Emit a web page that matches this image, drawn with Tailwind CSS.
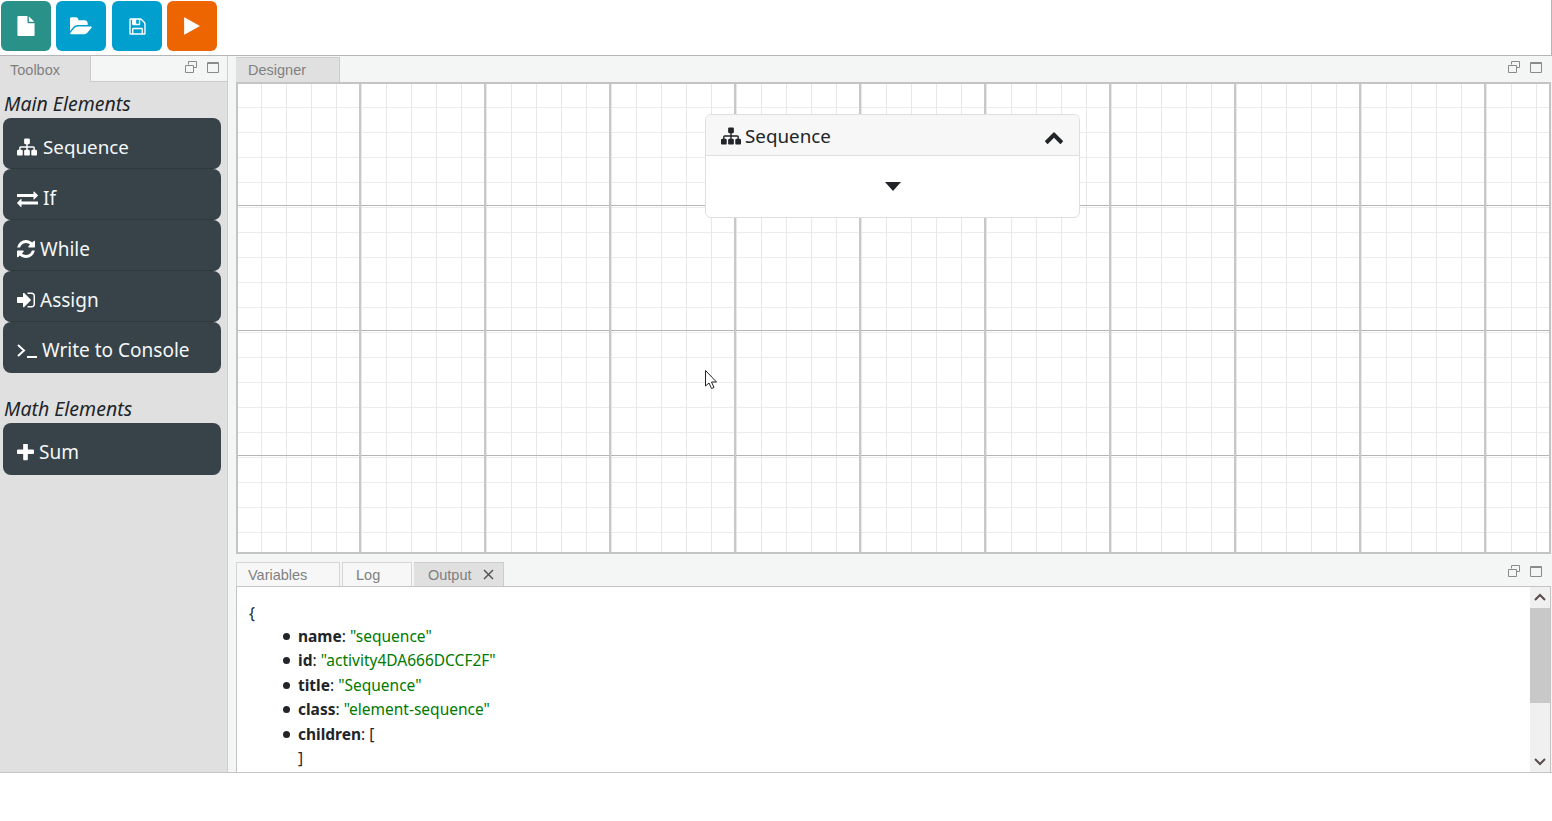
<!DOCTYPE html>
<html lang="en">
<head>
    <meta charset="UTF-8">
    <title>Workflow Designer</title>
    <script src="https://cdn.jsdelivr.net/npm/@tailwindcss/browser@4"></script>
</head>
<body class="h-[821px] overflow-hidden bg-white font-['Noto_Sans',sans-serif] text-[#212529]">

    <!-- Toolbar -->
    <div class="flex h-[56px] items-start border-r border-b border-[#b5b5b5] pt-px pl-px">
        <button class="flex size-[50px] items-center justify-center rounded-md bg-[#2a9188]">
            <svg class="size-[20px] fill-white" viewBox="0 0 1792 1792"><path d="M1152 512v-472q22 14 36 28l408 408q14 14 28 36h-472zm-128 32q0 40 28 68t68 28h544v1056q0 40-28 68t-68 28h-1344q-40 0-68-28t-28-68v-1600q0-40 28-68t68-28h800v544z"/></svg>
        </button>
        <button class="ml-[5px] flex size-[50px] items-center justify-center rounded-md bg-[#009fce]">
            <svg class="size-[23px] fill-white" viewBox="0 0 1920 1792"><path d="M1815 952q0 31-31 66l-336 396q-43 51-120.500 86.500t-143.500 35.500h-1088q-34 0-60.500-13t-26.500-43q0-31 31-66l336-396q43-51 120.500-86.500t143.500-35.500h1088q34 0 60.500 13t26.500 43zm-343-344v160h-832q-94 0-197 47.500t-164 119.500l-337 396-5 6q0-4-.5-12.500t-.5-12.500v-960q0-92 66-158t158-66h320q92 0 158 66t66 158v32h544q92 0 158 66t66 158z"/></svg>
        </button>
        <button class="ml-[6px] flex size-[50px] items-center justify-center rounded-md bg-[#009fce]">
            <svg class="size-[19px] fill-white" viewBox="0 0 1792 1792"><path d="M512 1536h768v-384h-768v384zm896 0h128v-896q0-14-10-38.500t-20-34.500l-281-281q-10-10-34-20t-39-10v416q0 40-28 68t-68 28h-576q-40 0-68-28t-28-68v-416h-128v1280h128v-416q0-40 28-68t68-28h832q40 0 68 28t28 68v416zm-384-928v-320q0-13-9.500-22.500t-22.500-9.500h-192q-13 0-22.500 9.500t-9.500 22.500v320q0 13 9.500 22.500t22.500 9.500h192q13 0 22.500-9.500t9.500-22.500zm640 32v928q0 40-28 68t-68 28h-1344q-40 0-68-28t-28-68v-1344q0-40 28-68t68-28h928q40 0 88 20t76 48l280 280q28 28 48 76t20 88z"/></svg>
        </button>
        <button class="ml-[5px] flex size-[50px] items-center justify-center rounded-md bg-[#ec6500]">
            <svg class="size-[20px] fill-white" viewBox="0 0 1792 1792"><path d="M1576 927l-1328 738q-23 13-39.500 3t-16.500-36v-1472q0-26 16.500-36t39.500 3l1328 738q23 13 23 31t-23 31z"/></svg>
        </button>
    </div>

    <!-- Panels -->
    <div class="flex h-[717px] border-b border-[#c4c4c4] bg-[#f4f5f5]">

        <!-- Toolbox -->
        <div class="flex w-[228px] shrink-0 flex-col border-r border-[#cfcfcf]">
            <div class="relative flex h-[26px] shrink-0 border-b border-[#cccccc]">
                <div class="-mb-px w-[91px] border-r border-[#cccccc] bg-[#e0e0e0] pt-[4px] pl-[10px] font-['Liberation_Sans',sans-serif] text-[14.500px] text-[#808080]">Toolbox</div>
                <div class="absolute top-[5px] right-[8px] flex items-center gap-[10px]">
                    <svg class="size-[12px] fill-none stroke-[#8a8a8a]" viewBox="0 0 12 12"><path d="M3.500 3.500V.5h8v6h-3M.5 4.500h8v7h-8z"/></svg>
                    <svg class="size-[12px] fill-none stroke-[#8a8a8a]" viewBox="0 0 12 12"><path d="M.5 1.500h11v10H.5zM.5 2.500h11"/></svg>
                </div>
            </div>
            <div class="flex-1 bg-[#e0e0e0] pt-[9px] pr-[6px] pl-[3px]">
                <h2 class="pl-px text-[19.500px] leading-[26px] italic">Main Elements</h2>
                <div class="mt-[1px] flex flex-col">
                    <button class="flex h-[51px] items-center gap-[6px] rounded-lg border-b border-[#2f3a40] bg-[#374349] pt-[8px] pl-[14px] text-[18.800px] text-[#f4f7f8]">
                        <svg class="size-[20px] fill-white" viewBox="0 0 1792 1792"><path d="M1792 1248v320q0 40-28 68t-68 28h-320q-40 0-68-28t-28-68v-320q0-40 28-68t68-28h96v-192h-512v192h96q40 0 68 28t28 68v320q0 40-28 68t-68 28h-320q-40 0-68-28t-28-68v-320q0-40 28-68t68-28h96v-192h-512v192h96q40 0 68 28t28 68v320q0 40-28 68t-68 28h-320q-40 0-68-28t-28-68v-320q0-40 28-68t68-28h96v-192q0-52 38-90t90-38h512v-192h-96q-40 0-68-28t-28-68v-320q0-40 28-68t68-28h320q40 0 68 28t28 68v320q0 40-28 68t-68 28h-96v192h512q52 0 90 38t38 90v192h96q40 0 68 28t28 68z"/></svg>
                        Sequence
                    </button>
                    <button class="flex h-[51px] items-center gap-[5px] rounded-lg border-b border-[#2f3a40] bg-[#374349] pt-[8px] pl-[14px] text-[19px] text-[#f4f7f8]">
                        <svg class="size-[21px] fill-white" viewBox="0 0 1792 1792"><path d="M1792 1184v192q0 13-9.500 22.500t-22.500 9.500h-1376v192q0 13-9.500 22.500t-22.500 9.500q-12 0-24-10l-319-320q-9-9-9-22 0-14 9-23l320-320q9-9 23-9 13 0 22.500 9.500t9.500 22.500v192h1376q13 0 22.500 9.500t9.500 22.500zm0-544q0 14-9 23l-320 320q-9 9-23 9-13 0-22.500-9.500t-9.500-22.500v-192h-1376q-13 0-22.500-9.500t-9.500-22.500v-192q0-13 9.500-22.500t22.500-9.500h1376v-192q0-14 9-23t23-9q12 0 24 10l319 319q9 9 9 23z"/></svg>
                        If
                    </button>
                    <button class="flex h-[51px] items-center gap-[5px] rounded-lg border-b border-[#2f3a40] bg-[#374349] pt-[8px] pl-[14px] text-[19px] text-[#f4f7f8]">
                        <svg class="size-[18px] fill-white" viewBox="128 128 1536 1536"><path d="M1639 1056q0 5-1 7-64 268-268 434.500t-478 166.500q-146 0-282.500-55t-243.500-157l-129 129q-19 19-45 19t-45-19-19-45v-448q0-26 19-45t45-19h448q26 0 45 19t19 45-19 45l-137 137q71 66 161 102t187 36q134 0 250-65t186-179q11-17 53-117 8-23 30-23h192q13 0 22.500 9.500t9.500 22.500zm25-800v448q0 26-19 45t-45 19h-448q-26 0-45-19t-19-45 19-45l138-138q-148-137-349-137-134 0-250 65t-186 179q-11 17-53 117-8 23-30 23h-199q-13 0-22.500-9.500t-9.500-22.500v-7q65-268 270-434.500t480-166.500q146 0 284 55.500t245 156.500l130-129q19-19 45-19t45 19 19 45z"/></svg>
                        While
                    </button>
                    <button class="flex h-[51px] items-center gap-[5px] rounded-lg border-b border-[#2f3a40] bg-[#374349] pt-[8px] pl-[14px] text-[19px] text-[#f4f7f8]">
                        <svg class="size-[18px] fill-white" viewBox="128 128 1536 1536"><path d="M1312 896q0 26-19 45l-544 544q-19 19-45 19t-45-19-19-45v-288h-448q-26 0-45-19t-19-45v-384q0-26 19-45t45-19h448v-288q0-26 19-45t45-19 45 19l544 544q19 19 19 45zm352-352v704q0 119-84.500 203.500t-203.500 84.500h-320q-13 0-22.500-9.500t-9.500-22.500q0-4-1-20t-.5-26.500 3-23.500 10-19.500 20.500-6.500h320q66 0 113-47t47-113v-704q0-66-47-113t-113-47h-320q-13 0-22.500-9.500t-9.500-22.500q0-4-1-20t-.5-26.500 3-23.500 10-19.500 20.500-6.500h320q119 0 203.500 84.500t84.500 203.500z"/></svg>
                        Assign
                    </button>
                    <button class="flex h-[51px] items-center gap-[5px] rounded-lg bg-[#374349] pt-[6px] pl-[14px] text-[19px] text-[#f4f7f8]">
                        <svg class="h-[14px] w-[20px] fill-none stroke-white stroke-2" viewBox="0 0 20 14"><path d="M1 1l6 5.500-6 5.500M10 13h10"/></svg>
                        Write to Console
                    </button>
                </div>
                <h2 class="mt-[23px] pl-px text-[19.500px] leading-[26px] italic">Math Elements</h2>
                <button class="mt-[1px] flex h-[52px] w-full items-center gap-[5px] rounded-lg bg-[#374349] pt-[6px] pl-[14px] text-[19px] text-[#f4f7f8]">
                    <svg class="size-[17px] fill-white" viewBox="192 192 1408 1408"><path d="M1600 736v192q0 40-28 68t-68 28h-416v416q0 40-28 68t-68 28h-192q-40 0-68-28t-28-68v-416h-416q-40 0-68-28t-28-68v-192q0-40 28-68t68-28h416v-416q0-40 28-68t68-28h192q40 0 68 28t28 68v416h416q40 0 68 28t28 68z"/></svg>
                    Sum
                </button>
            </div>
        </div>

        <!-- Designer and output -->
        <div class="ml-[8px] flex min-w-0 flex-1 flex-col pr-px">
            <div class="relative flex h-[26px] shrink-0 pt-[1px]">
                <div class="w-[104px] border-t border-r border-[#cccccc] bg-[#e0e0e0] pt-[2px] pl-[12px] font-['Liberation_Sans',sans-serif] text-[14.500px] text-[#808080]">Designer</div>
                <div class="absolute top-[5px] right-[9px] flex items-center gap-[10px]">
                    <svg class="size-[12px] fill-none stroke-[#8a8a8a]" viewBox="0 0 12 12"><path d="M3.500 3.500V.5h8v6h-3M.5 4.500h8v7h-8z"/></svg>
                    <svg class="size-[12px] fill-none stroke-[#8a8a8a]" viewBox="0 0 12 12"><path d="M.5 1.500h11v10H.5zM.5 2.500h11"/></svg>
                </div>
            </div>

            <!-- Canvas -->
            <div class="relative h-[472px] shrink-0 border-2 border-[#c4c4c4] bg-white bg-[linear-gradient(to_right,transparent_123px,#c8c8c8_123px,#c8c8c8_125px),linear-gradient(to_bottom,transparent_124px,#b5b5b5_124px,#b5b5b5_125px),linear-gradient(to_right,transparent_24px,#e8e8e8_24px,#e8e8e8_25px),linear-gradient(to_bottom,transparent_24px,#ececec_24px,#ececec_25px)] bg-[size:125px_125px,125px_125px,25px_25px,25px_25px] bg-[position:-2px_0,0_-3px,-1px_0,0_-1px]">
                <div class="absolute top-[30px] left-[467px] w-[375px] rounded-md border border-[#dfdfdf] bg-white">
                    <div class="flex h-[41px] items-center justify-between rounded-t-md border-b border-[#dfdfdf] bg-[#f7f7f7] pr-[15px] pl-[15px]">
                        <div class="flex items-center gap-[4px] pt-[2px] text-[18.800px]">
                            <svg class="size-[20px] fill-[#212529]" viewBox="0 0 1792 1792"><path d="M1792 1248v320q0 40-28 68t-68 28h-320q-40 0-68-28t-28-68v-320q0-40 28-68t68-28h96v-192h-512v192h96q40 0 68 28t28 68v320q0 40-28 68t-68 28h-320q-40 0-68-28t-28-68v-320q0-40 28-68t68-28h96v-192h-512v192h96q40 0 68 28t28 68v320q0 40-28 68t-68 28h-320q-40 0-68-28t-28-68v-320q0-40 28-68t68-28h96v-192q0-52 38-90t90-38h512v-192h-96q-40 0-68-28t-28-68v-320q0-40 28-68t68-28h320q40 0 68 28t28 68v320q0 40-28 68t-68 28h-96v192h512q52 0 90 38t38 90v192h96q40 0 68 28t28 68z"/></svg>
                            Sequence
                        </div>
                        <svg class="mt-[3px] size-[20px] fill-[#212529]" viewBox="0 0 1792 1792"><path d="M1683 1331l-166 165q-19 19-45 19t-45-19l-531-531-531 531q-19 19-45 19t-45-19l-166-165q-19-19-19-45.500t19-45.500l742-741q19-19 45-19t45 19l742 741q19 19 19 45.500t-19 45.500z"/></svg>
                    </div>
                    <div class="flex h-[61px] items-center justify-center">
                        <svg class="h-[10px] w-[16px] fill-[#212529]" viewBox="0 0 16 10"><path d="M0 0h16L8 9z"/></svg>
                    </div>
                </div>
                <!-- Mouse pointer -->
                <svg class="absolute top-[286px] left-[467px] h-[20px] w-[14px] fill-white stroke-[#222222]" viewBox="0 0 14 20"><path d="M.5.500v15.500l3.500-3 2.500 5.500 2.500-1-2.500-5.500h5z"/></svg>
            </div>

            <!-- Output tabs -->
            <div class="relative mt-[8px] flex h-[24px] shrink-0">
                <div class="w-[104px] border-t border-r border-l border-[#d5d5d5] bg-[#f7f7f7] pt-[2px] pl-[11px] font-['Liberation_Sans',sans-serif] text-[14.500px] text-[#808080]">Variables</div>
                <div class="ml-[2px] w-[70px] border-t border-r border-l border-[#d5d5d5] bg-[#f7f7f7] pt-[2px] pl-[13px] font-['Liberation_Sans',sans-serif] text-[14.500px] text-[#808080]">Log</div>
                <div class="ml-[2px] flex w-[90px] items-start gap-[11px] border-t border-r border-[#cccccc] bg-[#e0e0e0] pt-[2px] pl-[14px] font-['Liberation_Sans',sans-serif] text-[14.500px] text-[#808080]">
                    Output
                    <svg class="mt-[4px] size-[11px] fill-none stroke-[#555555] stroke-[1.500]" viewBox="0 0 11 11"><path d="M1 1l9 9M10 1l-9 9"/></svg>
                </div>
                <div class="absolute top-[3px] right-[9px] flex items-center gap-[10px]">
                    <svg class="size-[12px] fill-none stroke-[#8a8a8a]" viewBox="0 0 12 12"><path d="M3.500 3.500V.5h8v6h-3M.5 4.500h8v7h-8z"/></svg>
                    <svg class="size-[12px] fill-none stroke-[#8a8a8a]" viewBox="0 0 12 12"><path d="M.5 1.500h11v10H.5zM.5 2.500h11"/></svg>
                </div>
            </div>

            <!-- Output body -->
            <div class="flex min-h-0 flex-1 border-t border-r border-l border-[#c4c4c4] bg-white">
                <div class="flex-1 overflow-hidden pt-[14px] pl-[12px] text-[15.500px] leading-[24.500px]">
                    <div>{</div>
                    <ul class="-mt-[2px] pl-[49px]">
                        <li class="relative before:absolute before:top-[9px] before:-left-[15px] before:size-[7px] before:rounded-full before:bg-[#212529]"><b>name</b>: <span class="text-[#007a00]">"sequence"</span></li>
                        <li class="relative before:absolute before:top-[9px] before:-left-[15px] before:size-[7px] before:rounded-full before:bg-[#212529]"><b>id</b>: <span class="text-[#007a00]">"activity4DA666DCCF2F"</span></li>
                        <li class="relative before:absolute before:top-[9px] before:-left-[15px] before:size-[7px] before:rounded-full before:bg-[#212529]"><b>title</b>: <span class="text-[#007a00]">"Sequence"</span></li>
                        <li class="relative before:absolute before:top-[9px] before:-left-[15px] before:size-[7px] before:rounded-full before:bg-[#212529]"><b>class</b>: <span class="text-[#007a00]">"element-sequence"</span></li>
                        <li class="relative before:absolute before:top-[9px] before:-left-[15px] before:size-[7px] before:rounded-full before:bg-[#212529]"><b>children</b>: [</li>
                        <li>]</li>
                    </ul>
                </div>
                <div class="relative flex w-[20px] shrink-0 flex-col items-center justify-between bg-[#f0f0f0] py-[5px]">
                    <svg class="h-[10px] w-[12px] fill-none stroke-[#5a4a4a] stroke-2" viewBox="0 0 12 10"><path d="M1 8l5-5 5 5"/></svg>
                    <div class="absolute top-[21px] left-0 h-[95px] w-full bg-[#c8c8c8]"></div>
                    <svg class="h-[10px] w-[12px] fill-none stroke-[#5a4a4a] stroke-2" viewBox="0 0 12 10"><path d="M1 2l5 5 5-5"/></svg>
                </div>
            </div>
        </div>
    </div>
</body>
</html>
